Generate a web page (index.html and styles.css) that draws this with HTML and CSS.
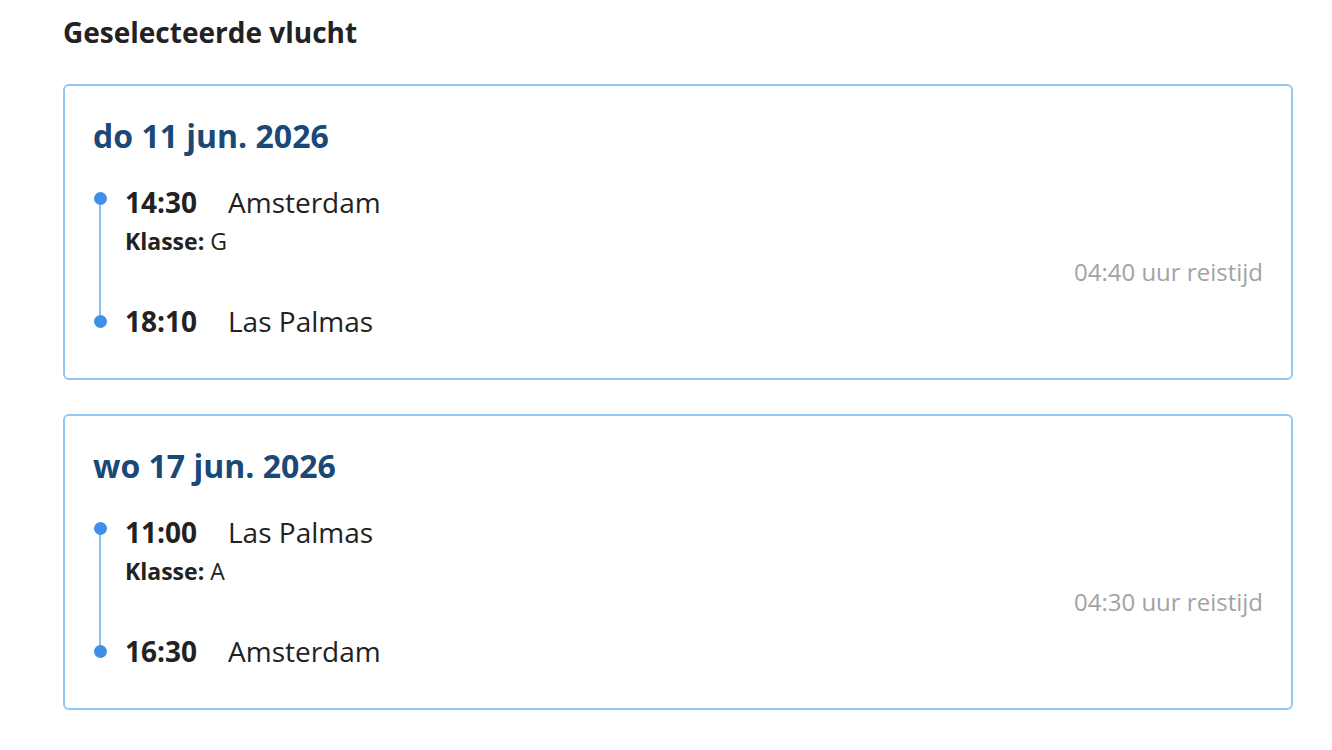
FILE: index.html
```html
<!DOCTYPE html>
<html lang="nl">
<head>
<meta charset="utf-8">
<title>Geselecteerde vlucht</title>
<link rel="stylesheet" href="styles.css">
</head>
<body>
<main class="page">
  <h2 class="title">Geselecteerde vlucht</h2>
  <section class="card">
    <h3 class="date">do 11 jun. 2026</h3>
    <div class="segment">
      <div class="stop dep"><span class="time">14:30</span><span class="place">Amsterdam</span></div>
      <div class="klasse"><strong>Klasse:</strong> G</div>
      <div class="duration">04:40 uur reistijd</div>
      <div class="stop arr"><span class="time">18:10</span><span class="place">Las Palmas</span></div>
    </div>
  </section>
  <section class="card">
    <h3 class="date">wo 17 jun. 2026</h3>
    <div class="segment">
      <div class="stop dep"><span class="time">11:00</span><span class="place">Las Palmas</span></div>
      <div class="klasse"><strong>Klasse:</strong> A</div>
      <div class="duration">04:30 uur reistijd</div>
      <div class="stop arr"><span class="time">16:30</span><span class="place">Amsterdam</span></div>
    </div>
  </section>
</main>
</body>
</html>
```
FILE: styles.css
```css
html, body {
  margin: 0;
  padding: 0;
  background: #ffffff;
}
body {
  font-family: "Open Sans", "Noto Sans", sans-serif;
  color: #222222;
}
.page {
  padding: 14px 39px 0 63px;
  display: flex;
  flex-direction: column;
  gap: 34px;
}
.title {
  margin: 0;
  font-size: 28px;
  line-height: 36px;
  font-weight: 700;
  color: #222222;
}
.card {
  border: 2px solid #93c6f3;
  border-radius: 6px;
  padding: 28px 28px 38px 28px;
  display: flex;
  flex-direction: column;
}
.date {
  margin: 0 0 25px 0;
  font-size: 32px;
  line-height: 44px;
  font-weight: 700;
  color: #1a4877;
}
.segment {
  position: relative;
  padding-left: 32px;
  display: flex;
  flex-direction: column;
}
.segment::before {
  content: "";
  position: absolute;
  left: 6px;
  top: 15px;
  bottom: 18px;
  width: 2px;
  background: #8ec2f3;
}
.stop {
  position: relative;
  display: flex;
  align-items: baseline;
  font-size: 28px;
  line-height: 38px;
}
.stop::before {
  content: "";
  position: absolute;
  left: -31px;
  width: 13px;
  height: 13px;
  border-radius: 50%;
  background: #3f8fe9;
}
.stop.dep::before {
  top: 8.5px;
}
.stop.arr::before {
  top: 12.5px;
}
.time {
  font-weight: 700;
  width: 103px;
}
.place {
  font-weight: 400;
}
.klasse {
  margin-top: 5px;
  font-size: 23px;
  line-height: 30px;
}
.klasse strong {
  font-weight: 700;
}
.duration {
  align-self: flex-end;
  font-size: 24px;
  line-height: 32px;
  color: #a3a3a3;
  margin-bottom: 14px;
}
```
